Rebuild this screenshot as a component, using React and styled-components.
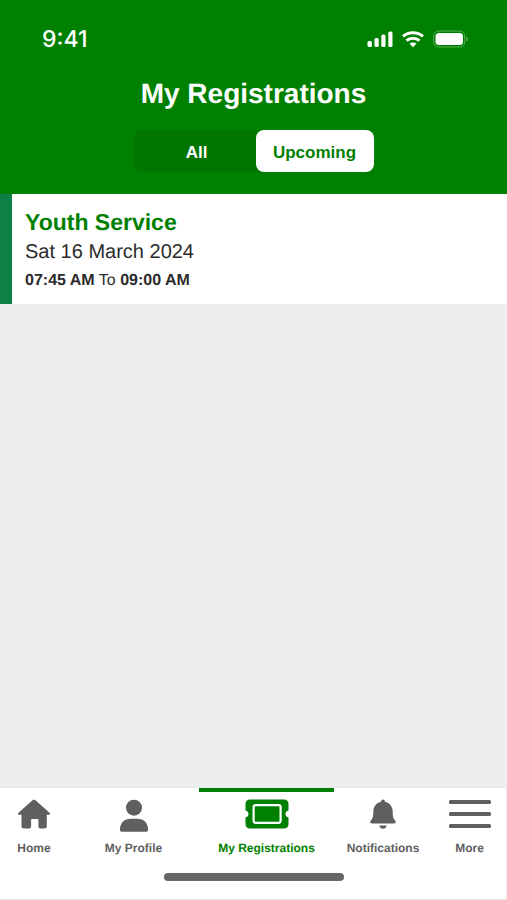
import React, { useState } from "react"
import styled, { createGlobalStyle } from "styled-components"

const GlobalStyle = createGlobalStyle`
  * {
    box-sizing: border-box;
  }
  body {
    margin: 0;
    background: #edefee;
    font-family: "Liberation Sans", Arial, sans-serif;
    text-rendering: geometricPrecision;
  }
`

const Page = styled.div`
  display: flex;
  flex-direction: column;
  min-height: 100vh;
`

const Header = styled.header`
  display: flex;
  flex-direction: column;
  align-items: center;
  padding: 24px 0 22px;
  background: #008000;
  color: #fff;
`

const StatusBar = styled.div`
  display: flex;
  align-items: center;
  justify-content: space-between;
  width: 100%;
  height: 30px;
  padding: 0 38px 0 42px;
`

const Clock = styled.time`
  font-family: Inter, sans-serif;
  font-size: 23px;
  font-weight: 500;
  line-height: 30px;
`

const StatusIcons = styled.div`
  display: flex;
  align-items: center;
  gap: 9px;
`

const Title = styled.h1`
  margin: 24px 0 20px;
  font-size: 28px;
  line-height: 32px;
`

const Segment = styled.div`
  display: flex;
  width: 240px;
  height: 42px;
  padding-left: 4px;
  border-radius: 8px;
  background: #007600;
`

const SegmentButton = styled.button`
  flex: 1;
  padding: 3px 0 0;
  border: 0;
  border-radius: 8px;
  background: ${({ $active }) => ($active ? "#fff" : "transparent")};
  color: ${({ $active }) => ($active ? "#008000" : "#fff")};
  font-family: inherit;
  font-size: 17px;
  font-weight: bold;
  cursor: pointer;
`

const List = styled.main`
  flex: 1;
`

const Card = styled.article`
  min-height: 110px;
  padding: 14px 12px 10px 13px;
  border-left: 12px solid #0c8045;
  background: #fff;
  color: #2b2b2b;
`

const CardTitle = styled.h2`
  margin: 0;
  color: #008000;
  font-size: 23px;
  line-height: 28px;
`

const CardDate = styled.div`
  font-size: 20px;
  line-height: 32px;
`

const CardTime = styled.div`
  font-size: 16px;
  line-height: 26px;
`

const Footer = styled.footer`
  display: flex;
  flex-direction: column;
  align-items: center;
  padding-bottom: 18px;
  border: solid #e6e7e6;
  border-width: 1px 0;
  background: #fff;
  box-shadow: inset -1px 0 #e9eaea;
`

const Nav = styled.nav`
  display: grid;
  grid-template-columns: 68fr 131fr 135fr 98fr 75fr;
  width: 100%;
  height: 85px;
`

const NavLink = styled.a`
  display: flex;
  flex-direction: column;
  align-items: center;
  gap: 7px;
  padding-top: 5px;
  border-top: 4px solid ${({ $active }) => ($active ? "#008000" : "transparent")};
  color: ${({ $active }) => ($active ? "#008000" : "#5f5f5f")};
  font-size: 12px;
  font-weight: bold;
  line-height: 16px;
  text-decoration: none;
  white-space: nowrap;

  svg {
    display: block;
    height: 36px;
    fill: currentColor;
  }
`

const HomeIndicator = styled.div`
  width: 180px;
  height: 8px;
  border-radius: 4px;
  background: #666;
`

const SignalIcon = () => (
  <svg width="26" height="18" viewBox="0 0 26 18" fill="#fff" aria-hidden="true">
    <rect x="0.5" y="11" width="4.4" height="6" rx="1.5" />
    <rect x="7.5" y="8" width="4.2" height="9" rx="1.5" />
    <rect x="14.3" y="4.5" width="4.2" height="12.5" rx="1.5" />
    <rect x="21.3" y="1.5" width="4.2" height="15.5" rx="1.5" />
  </svg>
)

const WifiIcon = () => (
  <svg width="22" height="18" viewBox="0 0 22 18" aria-hidden="true">
    <path
      d="M1 6.3C6.8 1.4 15.200 1.400 21 6.300M4.500 10.600c3.800-3.200 9.200-3.200 13 0"
      fill="none"
      stroke="#fff"
      strokeWidth="3"
    />
    <path d="M7.500 13.600c2.100-1.600 4.900-1.600 7 0L11 17.200z" fill="#fff" />
  </svg>
)

const BatteryIcon = () => (
  <svg width="36" height="18" viewBox="0 0 36 18" fill="#fff" aria-hidden="true">
    <rect x="0.7" y="1" width="31" height="16" rx="5" fill="none" stroke="#fff" opacity="0.35" />
    <rect x="2.5" y="3" width="27.5" height="12" rx="3.5" />
    <path d="M33.3 6.5c2 .8 2 4.2 0 5z" opacity="0.4" />
  </svg>
)

const HomeIcon = () => (
  <svg width="34" viewBox="0 0 34 36" aria-hidden="true">
    <path d="M15.8 3.100c.7-.6 1.700-.6 2.400 0l14.300 12.600c1 .9.5 2.100-.8 2.100h-1.900v11.400c0 1.400-.9 2.200-2.200 2.200h-4.400c-1.100 0-1.800-.7-1.800-1.800v-6.900c0-.5-.2-.7-.7-.7h-5.900c-.5 0-.7.2-.7.7v6.900c0 1.100-.7 1.800-1.800 1.800H6.700c-1.300 0-2.200-.8-2.200-2.200V17.800H2.300c-1.300 0-1.800-1.200-.8-2.100z" />
  </svg>
)

const ProfileIcon = () => (
  <svg width="30" viewBox="0 0 30 36" aria-hidden="true">
    <circle cx="15" cy="10.7" r="8" />
    <path d="M1 32.500C1 25.500 5.500 21.700 11.500 21.700h7c6 0 10.500 3.800 10.500 10.800v.6c0 1.200-.6 1.700-1.700 1.700H2.700C1.600 34.800 1 34.300 1 33.100z" />
  </svg>
)

const TicketIcon = () => (
  <svg width="44" viewBox="0 0 44 36" aria-hidden="true">
    <path d="M5 2.500h34c2.800 0 4.500 1.700 4.500 4.500v6.600c-1.900.3-3 1.600-3 3.400s1.100 3.100 3 3.400V27c0 2.800-1.700 4.500-4.500 4.500H5C2.200 31.500.5 29.800.5 27v-6.600c1.900-.3 3-1.600 3-3.400s-1.100-3.100-3-3.400V7C.5 4.200 2.200 2.500 5 2.500z" />
    <rect x="8.6" y="8.2" width="27" height="17.6" rx="2" fill="none" stroke="#fff" strokeWidth="2.2" />
  </svg>
)

const BellIcon = () => (
  <svg width="26" viewBox="0 0 26 36" aria-hidden="true">
    <path d="M13 2.500c1.100 0 1.800.8 2 2.200 4.800 1.200 7.700 4.900 7.700 10.100 0 4.600.5 6.600 2.500 8.900 1.200 1.500.5 2.700-1.100 2.700H1.900c-1.600 0-2.300-1.200-1.100-2.700 2-2.300 2.500-4.300 2.500-8.900C3.300 9.600 6.200 5.900 11 4.700c.2-1.400.9-2.200 2-2.200zM9.300 28.400h7.400c-.3 2-1.700 3.300-3.700 3.300s-3.400-1.300-3.700-3.300z" />
  </svg>
)

const MenuIcon = () => (
  <svg width="42" viewBox="0 0 42 36" aria-hidden="true">
    <rect x="0" y="3" width="42" height="4" rx="1.5" />
    <rect x="0" y="15" width="42" height="4" rx="1.5" />
    <rect x="0" y="27" width="42" height="4" rx="1.5" />
  </svg>
)

const navItems = [
  { label: "Home", href: "#home", Icon: HomeIcon },
  { label: "My Profile", href: "#profile", Icon: ProfileIcon },
  { label: "My Registrations", href: "#registrations", Icon: TicketIcon, active: true },
  { label: "Notifications", href: "#notifications", Icon: BellIcon },
  { label: "More", href: "#more", Icon: MenuIcon },
]

const RegistrationCard = ({ title, date, start, end }) => (
  <Card>
    <CardTitle>{title}</CardTitle>
    <CardDate>{date}</CardDate>
    <CardTime>
      <b>{start}</b> To <b>{end}</b>
    </CardTime>
  </Card>
)

const App = () => {
  const [filter, setFilter] = useState("Upcoming")

  return (
    <Page>
      <GlobalStyle />
      <Header>
        <StatusBar>
          <Clock>9:41</Clock>
          <StatusIcons>
            <SignalIcon />
            <WifiIcon />
            <BatteryIcon />
          </StatusIcons>
        </StatusBar>
        <Title>My Registrations</Title>
        <Segment>
          {["All", "Upcoming"].map((name) => (
            <SegmentButton
              key={name}
              type="button"
              $active={filter === name}
              aria-pressed={filter === name}
              onClick={() => setFilter(name)}
            >
              {name}
            </SegmentButton>
          ))}
        </Segment>
      </Header>
      <List>
        <RegistrationCard
          title="Youth Service"
          date="Sat 16 March 2024"
          start="07:45 AM"
          end="09:00 AM"
        />
      </List>
      <Footer>
        <Nav>
          {navItems.map(({ label, href, Icon, active }) => (
            <NavLink
              key={label}
              href={href}
              $active={active}
              aria-current={active ? "page" : undefined}
            >
              <Icon />
              {label}
            </NavLink>
          ))}
        </Nav>
        <HomeIndicator />
      </Footer>
    </Page>
  )
}

export default App
